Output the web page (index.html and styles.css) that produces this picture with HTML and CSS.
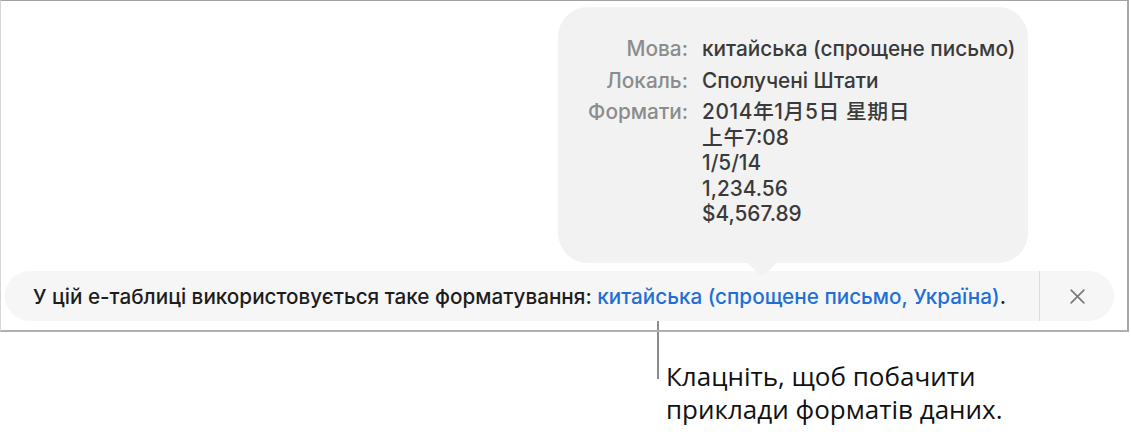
FILE: index.html
```html
<!DOCTYPE html>
<html lang="uk">
<head>
<meta charset="utf-8">
<title>Формат таблиці</title>
<link rel="stylesheet" href="styles.css">
</head>
<body>
  <div class="frame">
    <div class="popover">
      <div class="pop-grid">
        <div class="label">Мова:</div>
        <div class="value">китайська (спрощене письмо)</div>
        <div class="label">Локаль:</div>
        <div class="value">Сполучені Штати</div>
        <div class="label">Формати:</div>
        <div class="value lines">
          <span><span class="cjk">2014年1月5日 星期日</span></span>
          <span><span class="cjk">上午</span>7:08</span>
          <span>1/5/14</span>
          <span>1,234.56</span>
          <span>$4,567.89</span>
        </div>
      </div>
      <div class="pop-arrow"></div>
    </div>
    <div class="bar">
      <div class="bar-text">У цій е-таблиці використовується таке форматування: <a class="link" href="#">китайська (спрощене письмо, Україна)</a>.</div>
      <div class="bar-close">
        <svg width="17" height="17" viewBox="0 0 16 16" aria-hidden="true">
          <path d="M2 2 L14 14 M14 2 L2 14" stroke="#777777" stroke-width="1.5" stroke-linecap="round" fill="none"/>
        </svg>
      </div>
    </div>
  </div>
  <div class="callout">
    <div class="callout-line"></div>
    <div class="callout-text">Клацніть, щоб побачити<br>приклади форматів даних.</div>
  </div>
</body>
</html>
```

FILE: styles.css
```css
html, body {
  margin: 0;
  padding: 0;
  background: #ffffff;
}

body {
  font-family: Inter, "Noto Sans", "Noto Sans CJK SC", sans-serif;
  width: 1131px;
  height: 434px;
  overflow: hidden;
}

.frame {
  position: relative;
  box-sizing: border-box;
  width: 1129px;
  height: 332px;
  border-top: 1px solid #a2a2a2;
  border-left: 1px solid #d6d6d6;
  border-right: 2px solid #a8a8a8;
  border-bottom: 2px solid #b0b0b0;
  display: flex;
  flex-direction: column;
  justify-content: flex-end;
  padding: 0 13px 9px 4px;
}

/* Locale details popover */
.popover {
  position: absolute;
  left: 557px;
  top: 6px;
  width: 470px;
  height: 256px;
  box-sizing: border-box;
  background: #f2f2f2;
  border-radius: 30px;
  padding: 29px 0 0 0;
  z-index: 2;
}

.pop-grid {
  display: grid;
  grid-template-columns: 130px auto;
  column-gap: 14px;
  row-gap: 6px;
  font-size: 20.8px;
  line-height: 25.5px;
  font-weight: 500;
}

.label {
  color: #8c8c8c;
  text-align: right;
}

.value {
  color: #3a3a3a;
}

.lines {
  display: flex;
  flex-direction: column;
}

.cjk {
  letter-spacing: 0.6px;
}

.pop-arrow {
  position: absolute;
  left: 191px;
  bottom: -9px;
  width: 26px;
  height: 26px;
  background: #f2f2f2;
  transform: rotate(45deg);
  border-bottom-right-radius: 6px;
}

/* Notice bar */
.bar {
  display: flex;
  align-items: stretch;
  height: 50px;
  background: #f6f6f6;
  border-radius: 25px;
}

.bar-text {
  flex: 1;
  display: flex;
  align-items: center;
  padding-left: 28px;
  font-size: 20.7px;
  font-weight: 500;
  color: #1d1d1d;
  white-space: pre;
}

.link {
  color: #1f6fd6;
  text-decoration: none;
  font-weight: 500;
}

.bar-close {
  width: 74px;
  border-left: 1px solid #dcdcdc;
  display: flex;
  align-items: center;
  justify-content: center;
}

/* Callout annotation */
.callout {
  display: flex;
  padding-left: 657px;
}

.callout-line {
  width: 2px;
  height: 58px;
  margin-top: -11px;
  background: #8c8c8c;
}

.callout-text {
  margin-left: 7px;
  margin-top: 28px;
  font-family: "Open Sans", "Noto Sans", sans-serif;
  font-size: 26px;
  line-height: 33px;
  color: #111111;
}
```
